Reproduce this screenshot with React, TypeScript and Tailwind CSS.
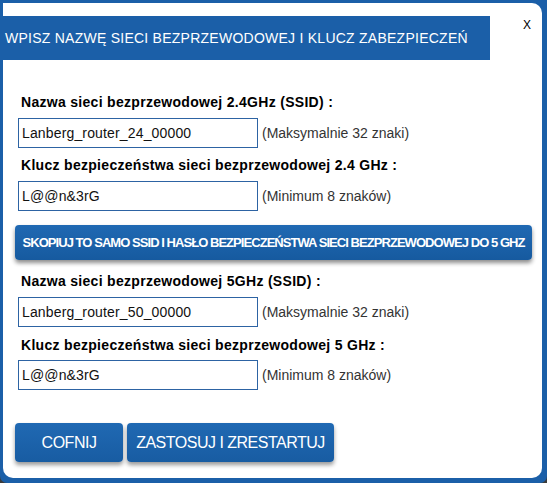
import type { ReactNode } from 'react';

const BLUE = 'bg-[#1b5fa8]';

function Label({ children }: { children: ReactNode }) {
  return (
    <p className="ml-[6px] h-[20px] text-[14px] leading-[20px] font-bold tracking-[0.3px] text-black">
      {children}
    </p>
  );
}

function Field({ value, hint }: { value: string; hint: string }) {
  return (
    <div className="ml-[3px] flex items-center">
      <input
        readOnly
        value={value}
        className="h-[30px] w-[240px] border border-[#2d63a3] bg-white pl-[3px] text-[14px] tracking-[0.15px] text-[#111] outline-none"
      />
      <span className="ml-[4px] text-[14px] text-[#333]">{hint}</span>
    </div>
  );
}

export default function App() {
  return (
    <div
      className="h-[483px] w-[547px] bg-[#3b3b3b]"
      style={{ fontFamily: '"Liberation Sans", Arial, sans-serif' }}
    >
      <div className={`h-full w-full ${BLUE} rounded-b-[7px] pt-[3px] pl-[3px] pr-[5px] pb-[5px]`}>
        <div className="relative h-full w-full rounded-tr-[10px] rounded-b-[10px] bg-white">
          {/* Header */}
          <div className="pt-[13px]">
            <div className={`-ml-[3px] flex h-[44px] w-[490px] items-center ${BLUE} pl-[5px]`}>
              <span className="text-[14px] tracking-[0.25px] text-white">
                WPISZ NAZWĘ SIECI BEZPRZEWODOWEJ I KLUCZ ZABEZPIECZEŃ
              </span>
            </div>
          </div>
          <span className="absolute right-[11px] top-[15px] text-[12px] leading-[14px] text-black">X</span>

          {/* Form */}
          <div className="pl-[12px] pt-[32px]">
            <Label>Nazwa sieci bezprzewodowej 2.4GHz (SSID) :</Label>
            <div className="mt-[6px]">
              <Field value="Lanberg_router_24_00000" hint="(Maksymalnie 32 znaki)" />
            </div>
            <div className="mt-[7px]">
              <Label>Klucz bezpieczeństwa sieci bezprzewodowej 2.4 GHz :</Label>
            </div>
            <div className="mt-[6px]">
              <Field value="L@@n&3rG" hint="(Minimum 8 znaków)" />
            </div>

            <button className="mt-[14px] flex h-[35px] w-[517px] items-center justify-center rounded-[4px] bg-gradient-to-b from-[#2069b3] to-[#165a9f] text-[13px] font-bold tracking-[-0.95px] text-white shadow-[0_3px_4px_rgba(0,0,0,0.45)]">
              SKOPIUJ TO SAMO SSID I HASŁO BEZPIECZEŃSTWA SIECI BEZPRZEWODOWEJ DO 5 GHZ
            </button>

            <div className="mt-[11px]">
              <Label>Nazwa sieci bezprzewodowej 5GHz (SSID) :</Label>
            </div>
            <div className="mt-[6px]">
              <Field value="Lanberg_router_50_00000" hint="(Maksymalnie 32 znaki)" />
            </div>
            <div className="mt-[8px]">
              <Label>Klucz bezpieczeństwa sieci bezprzewodowej 5 GHz :</Label>
            </div>
            <div className="mt-[5px]">
              <Field value="L@@n&3rG" hint="(Minimum 8 znaków)" />
            </div>

            <div className="mt-[33px] flex gap-[4px]">
              <button className="h-[39px] w-[108px] rounded-[4px] bg-gradient-to-b from-[#2069b3] to-[#185ca2] text-[16px] tracking-[-0.5px] text-white shadow-[0_3px_4px_rgba(0,0,0,0.4)]">
                COFNIJ
              </button>
              <button className="h-[39px] w-[207px] rounded-[4px] bg-gradient-to-b from-[#2069b3] to-[#185ca2] text-[16px] tracking-[-0.5px] text-white shadow-[0_3px_4px_rgba(0,0,0,0.4)]">
                ZASTOSUJ I ZRESTARTUJ
              </button>
            </div>
          </div>
        </div>
      </div>
    </div>
  );
}
